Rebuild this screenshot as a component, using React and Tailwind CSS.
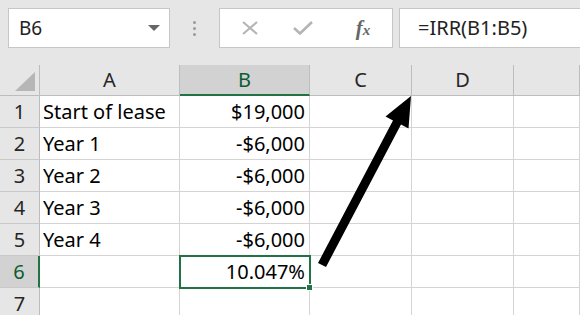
import React from "react";

const font = { fontFamily: '"Noto Sans", "Liberation Sans", sans-serif' };

const cols = ["A", "B", "C", "D", ""];
const rows = [
  ["Start of lease", "$19,000"],
  ["Year 1", "-$6,000"],
  ["Year 2", "-$6,000"],
  ["Year 3", "-$6,000"],
  ["Year 4", "-$6,000"],
  ["", "10.047%"],
  ["", ""],
];

export default function App() {
  return (
    <div
      className="relative w-[580px] h-[315px] overflow-hidden bg-[#e6e6e6] text-black"
      style={font}
    >
      {/* toolbar */}
      <div className="h-[65px] flex items-start pt-[8px] pl-[8px]">
        <div className="w-[162px] h-[40px] bg-white border border-[#c6c6c6] flex items-center justify-between pl-[10px] pr-[9px]">
          <span className="text-[19px] text-[#222]">B6</span>
          <svg width="12" height="6" viewBox="0 0 12 6">
            <path d="M0 0 L12 0 L6 6 Z" fill="#666" />
          </svg>
        </div>
        <div className="w-[49px] h-[40px] flex flex-col items-center justify-center gap-[3px]">
          <span className="w-[3px] h-[3px] bg-[#9a9a9a] rounded-full" />
          <span className="w-[3px] h-[3px] bg-[#9a9a9a] rounded-full" />
          <span className="w-[3px] h-[3px] bg-[#9a9a9a] rounded-full" />
        </div>
        <div className="w-[174px] h-[40px] bg-white border border-[#c6c6c6] flex items-center">
          <div className="w-[58px] flex justify-center pl-[2px]">
            <svg width="16" height="14" viewBox="0 0 16 14">
              <path d="M1 1 L15 13 M15 1 L1 13" stroke="#b4b4b4" strokeWidth="2" />
            </svg>
          </div>
          <div className="w-[50px] flex justify-center">
            <svg width="20" height="14" viewBox="0 0 20 14">
              <path d="M1 7 L7 12.5 L19 1" stroke="#b4b4b4" strokeWidth="2.6" fill="none" />
            </svg>
          </div>
          <div className="flex-1 flex justify-center pl-[6px]">
            <span
              className="text-[21px] italic font-bold text-[#666] leading-none"
              style={{ fontFamily: '"Liberation Serif", "DejaVu Serif", serif' }}
            >
              f<span className="text-[15px]">x</span>
            </span>
          </div>
        </div>
        <div className="ml-[6px] flex-1 h-[40px] bg-white border border-[#c6c6c6] border-r-0 flex items-center pl-[18px]">
          <span className="text-[20px] text-[#222]">=IRR(B1:B5)</span>
        </div>
      </div>

      {/* grid */}
      <div className="grid grid-cols-[40px_140px_130px_102px_102px_66px] bg-white">
        {/* header row */}
        <div className="h-[31px] bg-[#e6e6e6] border-r border-b border-[#bdbdbd] relative">
          <svg className="absolute right-[4px] bottom-[4px]" width="20" height="19" viewBox="0 0 20 19">
            <path d="M20 0 L20 19 L0 19 Z" fill="#b6b6b6" />
          </svg>
        </div>
        {cols.map((c, i) =>
          c === "B" ? (
            <div
              key={i}
              className="h-[31px] bg-[#d2d2d2] border-r border-[#bdbdbd] border-b-2 border-b-[#217346] flex items-center justify-center text-[20px] text-[#0d5c2f]"
            >
              {c}
            </div>
          ) : (
            <div
              key={i}
              className="h-[31px] bg-[#e6e6e6] border-r border-b border-[#bdbdbd] flex items-center justify-center text-[20px] text-[#262626]"
            >
              {c}
            </div>
          )
        )}
        {rows.map((r, ri) => (
          <React.Fragment key={ri}>
            {ri === 5 ? (
              <div className="h-[32px] bg-[#d2d2d2] border-b border-[#c8c8c8] border-r-2 border-r-[#217346] flex items-center justify-center text-[20px] text-[#0d5c2f]">
                {ri + 1}
              </div>
            ) : (
              <div className="h-[32px] bg-[#e6e6e6] border-b border-[#c8c8c8] border-r border-r-[#bdbdbd] flex items-center justify-center text-[20px] text-[#262626]">
                {ri + 1}
              </div>
            )}
            <div className="h-[32px] border-r border-b border-[#d4d4d4] flex items-center pl-[3px] text-[20px] whitespace-nowrap">
              {r[0]}
            </div>
            {ri === 5 ? (
              <div className="relative h-[32px] border-r border-b border-[#d4d4d4]">
                <div className="absolute -left-[1px] -top-[1px] w-[132px] h-[34px] border-2 border-[#217346] flex items-center justify-end pr-[4px] text-[20px]">
                  {r[1]}
                </div>
                <div className="absolute -right-[4px] -bottom-[4px] w-[7px] h-[7px] bg-[#217346] border border-white" />
              </div>
            ) : (
              <div className="h-[32px] border-r border-b border-[#d4d4d4] flex items-center justify-end pr-[4px] text-[20px] whitespace-nowrap">
                {r[1]}
              </div>
            )}
            <div className="h-[32px] border-r border-b border-[#d4d4d4]" />
            <div className="h-[32px] border-r border-b border-[#d4d4d4]" />
            <div className="h-[32px] border-r border-b border-[#d4d4d4]" />
          </React.Fragment>
        ))}
      </div>

      {/* arrow */}
      <svg className="absolute left-0 top-0 pointer-events-none" width="580" height="315" viewBox="0 0 580 315">
        <polygon
          points="318,263 393,120.4 385.5,116.5 411,96 408.5,128.5 401,124.6 326,267"
          fill="#000"
        />
      </svg>
    </div>
  );
}
